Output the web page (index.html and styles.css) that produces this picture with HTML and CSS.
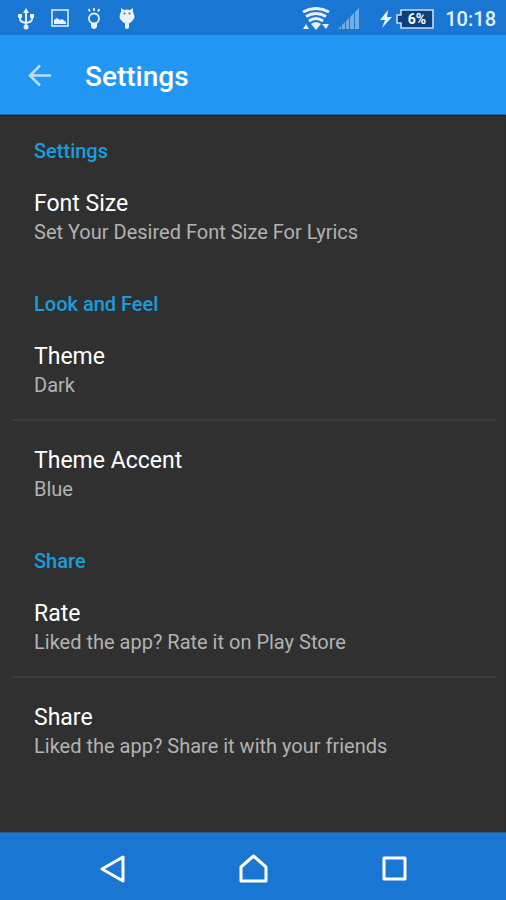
FILE: index.html
```html
<!DOCTYPE html>
<html lang="en">
<head>
<meta charset="utf-8">
<meta name="viewport" content="width=device-width, initial-scale=1">
<title>Settings</title>
<link rel="stylesheet" href="styles.css">
</head>
<body>
<div class="status">
  <div class="status-left">
    <svg width="16" height="22" viewBox="0 0 16 22" fill="none" stroke="currentColor" stroke-width="2"><path d="M8 3v16M2 8v3q0 3 6 4M14 8v3q0 3-6 4"/><path d="M8 0l3 5H5zM0 6h4v4H0zM12 6h4v4h-4z" fill="currentColor" stroke="none"/><circle cx="8" cy="19" r="2.5" fill="currentColor" stroke="none"/></svg>
    <svg width="18" height="22" viewBox="0 0 18 22"><rect x="1" y="2" width="16" height="16" fill="none" stroke="currentColor" stroke-width="1.5"/><path d="M3 16v-4l3-2 3 2 2-1 4 3v2z" fill="currentColor"/></svg>
    <svg width="16" height="22" viewBox="0 0 16 22" fill="none" stroke="currentColor" stroke-width="1.800"><circle cx="8" cy="10.500" r="5"/><path d="M8 0v3M2.500 1l1.500 2.500M13.500 1L12 3.500"/><path d="M5 15h6v4l-2 2H7l-2-2z" fill="currentColor" stroke="none"/></svg>
    <svg width="16" height="22" viewBox="0 0 16 22" fill="currentColor"><path d="M2 0l3 2q3-1 6 0l3-2v4q3 5 0 8-2 3-4 3.500V20q-2 2-4 0v-4.500Q4 15 2 12q-3-3 0-8z"/><circle cx="5.500" cy="5.500" r="1" fill="#1976d2"/><circle cx="10.500" cy="5.500" r="1" fill="#1976d2"/></svg>
  </div>
  <div class="status-right">
    <svg width="28" height="24" viewBox="0 0 28 24" fill="none" stroke="currentColor" stroke-width="3"><path d="M1 5q13-7 26 0M4 9.500q10-6 20 0M7 14q7-5 14 0"/><path d="M9 17q5-4 10 0l-5 6z" fill="currentColor" stroke="none"/><path d="M4 17l3 5H1zM20 17h7l-3 5z" fill="currentColor" stroke="none"/></svg>
    <svg class="signal" width="22" height="22" viewBox="0 0 22 22" fill="currentColor"><path d="M0 21l3-3v3zM4 21v-4l3-3v7zM8 21v-8l3-3v11zM12 21V9l4-4v16zM17 21V4l4-4v21z"/></svg>
    <svg class="bolt" width="12" height="18" viewBox="0 0 12 18" fill="currentColor"><path d="M8 0L0 10h5l-3 8L12 7H7z"/></svg>
    <svg width="38" height="20" viewBox="0 0 38 20"><path d="M5 1h32v18H5v-5H1V6h4z" fill="#0d3f7c" stroke="#c5dcf6" stroke-width="1.600"/><text class="charge" x="21" y="15" text-anchor="middle">6%</text></svg>
    <time>10:18</time>
  </div>
</div>
<header class="bar">
  <button class="back" aria-label="Back"><svg width="24" height="24" viewBox="0 0 24 24" fill="none" stroke="currentColor" stroke-width="2.600"><path d="M23 11.500H2M12 1.500l-10 10 10 10"/></svg></button>
  <h1>Settings</h1>
</header>
<main>
  <section>
    <h2>Settings</h2>
    <button class="row"><span class="title">Font Size</span><span class="summary">Set Your Desired Font Size For Lyrics</span></button>
  </section>
  <section>
    <h2>Look and Feel</h2>
    <button class="row"><span class="title">Theme</span><span class="summary">Dark</span></button>
    <hr>
    <button class="row"><span class="title">Theme Accent</span><span class="summary">Blue</span></button>
  </section>
  <section>
    <h2>Share</h2>
    <button class="row"><span class="title">Rate</span><span class="summary">Liked the app? Rate it on Play Store</span></button>
    <hr>
    <button class="row"><span class="title">Share</span><span class="summary">Liked the app? Share it with your friends</span></button>
  </section>
</main>
<nav class="nav">
  <button aria-label="Back"><svg width="30" height="30" viewBox="0 0 30 30"><path d="M26 3v24L5 15z"/></svg></button>
  <button aria-label="Home"><svg width="30" height="30" viewBox="0 0 30 30"><path d="M3 27V13L15.500 2 28 13v14z"/></svg></button>
  <button aria-label="Recent apps"><svg width="30" height="30" viewBox="0 0 30 30"><path d="M5 4h21v21H5z"/></svg></button>
</nav>
</body>
</html>
```
FILE: styles.css
```css
* { box-sizing: border-box; }
body {
  margin: 0;
  min-height: 100vh;
  display: flex;
  flex-direction: column;
  background: #303030;
  color: #fff;
  font-family: Roboto, sans-serif;
}
button {
  border: 0;
  padding: 0;
  background: none;
  color: inherit;
  font: inherit;
  text-align: left;
}
svg { display: block; flex: none; }
.status {
  display: flex;
  justify-content: space-between;
  align-items: center;
  height: 35px;
  padding: 2px 10px 0 18px;
  background: #1976d2;
  color: #e8f1fc;
}
.status-left { display: flex; gap: 17px; }
.status-right { display: flex; align-items: center; }
.signal { margin-left: 8px; opacity: 0.45; }
.bolt { margin: 0 4px 0 20px; }
.charge { fill: #fff; font-size: 14px; font-weight: 700; }
time { margin-left: 11px; font-size: 20px; font-weight: 500; }
.bar {
  display: flex;
  align-items: center;
  gap: 33px;
  height: 80px;
  padding: 3px 28px 0;
  background: #2196f3;
  border-bottom: 1px solid #1d6cab;
}
.back { color: #b9defb; }
h1 { margin: 0; font-size: 28px; font-weight: 500; }
main { flex: 1; padding-bottom: 24px; box-shadow: inset 0 1px 1px #202020; }
h2 {
  margin: 0;
  padding: 26px 34px 1px;
  color: #189ddd;
  font-size: 20px;
  font-weight: 500;
  line-height: 24px;
}
section:first-child h2 { padding-top: 24px; }
.row { display: block; width: 100%; padding: 26px 34px 20px; }
.title, .summary { display: block; line-height: 28px; }
.title { font-size: 23px; }
.summary { color: #b2b2b2; font-size: 20px; }
hr { height: 2px; margin: 0 10px 0 12px; border: 0; background: #3b3b3b; }
.nav {
  display: flex;
  justify-content: center;
  gap: 111px;
  height: 68px;
  padding-top: 5px;
  background: #1976d2;
  border-top: 1px solid #285d92;
}
.nav svg { fill: none; stroke: #fff; stroke-width: 3; stroke-linejoin: round; }
```
